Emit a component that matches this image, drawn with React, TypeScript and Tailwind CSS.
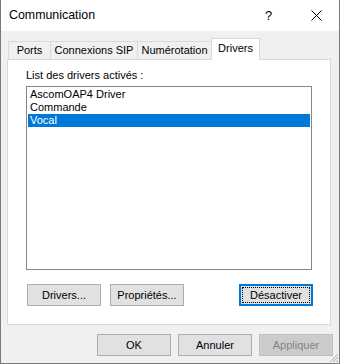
const font = { fontFamily: '"Liberation Sans", Arial, sans-serif' };

function Tab({ label, width, active }: { label: string; width: number; active?: boolean }) {
  return (
    <div
      style={{ width }}
      className={
        active
          ? "-ml-px -mb-px flex h-[22px] items-start justify-center border border-b-0 border-[#d9d9d9] bg-white pt-[3px] text-[11px] leading-[13px] text-black relative z-10"
          : "-ml-px flex h-[18px] items-center justify-center border border-b-0 border-[#d9d9d9] bg-[#f0f0f0] text-[11px] leading-[13px] text-black"
      }
    >
      {label}
    </div>
  );
}

function Button({ label, disabled, focused }: { label: string; disabled?: boolean; focused?: boolean }) {
  if (focused) {
    return (
      <div className="flex h-[22px] w-[74px] border-2 border-[#0078d7] bg-[#e1e1e1]">
        <div className="m-[1px] flex flex-1 items-center justify-center border border-dotted border-black text-[11px] leading-[13px] text-black">
          {label}
        </div>
      </div>
    );
  }
  return (
    <div
      className={
        disabled
          ? "flex h-[22px] w-[74px] items-center justify-center border border-[#bfbfbf] bg-[#cccccc] text-[11px] leading-[13px] text-[#838383]"
          : "flex h-[22px] w-[74px] items-center justify-center border border-[#adadad] bg-[#e1e1e1] text-[11px] leading-[13px] text-black"
      }
    >
      {label}
    </div>
  );
}

const drivers = ["AscomOAP4 Driver", "Commande", "Vocal"];

export default function App() {
  const selected = 2;

  return (
    <div
      style={font}
      className="relative flex h-[364px] w-[340px] flex-col border-x border-b border-[#7a7a7a] bg-[#f0f0f0]"
    >
      {/* title bar */}
      <div className="flex h-[31px] items-center bg-white pl-[8px]">
        <span className="flex-1 text-[12.4px] text-black">Communication</span>
        <span className="w-[12px] text-[13px] text-black">?</span>
        <svg className="ml-[34px] mr-[17px]" width="11" height="11" viewBox="0 0 11 11">
          <path d="M0.5 0.5 L10.5 10.5 M10.5 0.5 L0.5 10.5" stroke="#000" strokeWidth="1" />
        </svg>
      </div>

      {/* body */}
      <div className="flex flex-1 flex-col pl-[6px] pt-[7px]">
        <div className="flex h-[21px] items-end pl-[2px]">
          <Tab label="Ports" width={43} />
          <Tab label="Connexions SIP" width={88} />
          <Tab label="Numérotation" width={75} />
          <Tab label="Drivers" width={49} active />
        </div>

        <div className="flex h-[266px] w-[324px] flex-col border border-[#d9d9d9] bg-white pl-[18px] pt-[9px]">
          <div className="h-[13px] text-[11px] leading-[13px] text-black">List des drivers activés :</div>
          <div className="mt-[4px] flex h-[184px] w-[286px] flex-col border border-[#828790] bg-white px-[1px] pt-[1px]">
            {drivers.map((d, i) => (
              <div
                key={d}
                className={
                  i === selected
                    ? "h-[13px] bg-[#0078d7] pl-[2px] text-[11px] leading-[13px] text-white"
                    : "h-[13px] pl-[2px] text-[11px] leading-[13px] text-black"
                }
              >
                {d}
              </div>
            ))}
          </div>
          <div className="mt-[14px] flex items-start pl-[1px]">
            <Button label="Drivers..." />
            <div className="ml-[9px]">
              <Button label="Propriétés..." />
            </div>
            <div className="ml-[55px]">
              <Button label="Désactiver" focused />
            </div>
          </div>
        </div>

        <div className="mt-[9px] flex justify-end gap-[7px] pr-[6px]">
          <Button label="OK" />
          <Button label="Annuler" />
          <Button label="Appliquer" disabled />
        </div>
      </div>

      {/* resize grip */}
      <svg className="absolute bottom-0 right-0" width="11" height="11" viewBox="0 0 11 11">
        <path d="M10 2 L2 10 M10 5 L5 10 M10 8 L8 10" stroke="#b0b0b0" strokeWidth="1" />
      </svg>
    </div>
  );
}
